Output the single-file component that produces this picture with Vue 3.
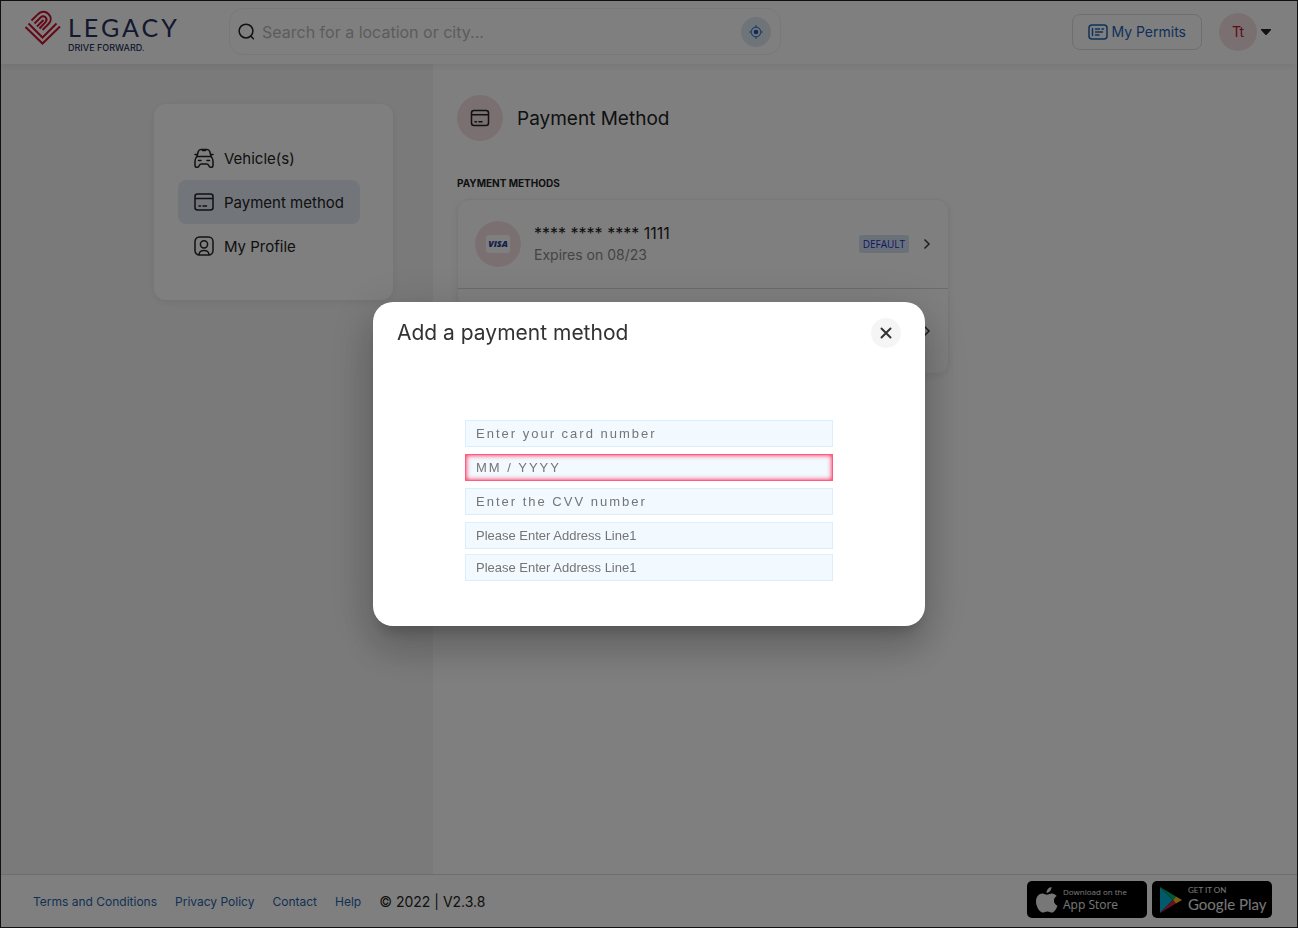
<script setup>
import { ref } from 'vue'

const query = ref('')
const footerLinks = ['Terms and Conditions', 'Privacy Policy', 'Contact', 'Help']
const fields = [
  { id: 'card-number', hint: 'Enter your card number', spaced: true },
  { id: 'card-expiry', hint: 'MM / YYYY', spaced: true, invalid: true },
  { id: 'card-cvv', hint: 'Enter the CVV number', spaced: true },
  { id: 'address-1', hint: 'Please Enter Address Line1' },
  { id: 'address-2', hint: 'Please Enter Address Line1', tight: true },
]
</script>

<template>
  <div class="page">
    <header class="topbar">
      <a class="logo" href="#" aria-label="Legacy Drive Forward">
        <svg width="38" height="36" viewBox="0 0 38 36" fill="none" stroke="#c8102e" stroke-width="2" aria-hidden="true">
          <path d="M1.500 17 18.500 33.500 36 16.500" />
          <path d="M4.500 13.500 18.500 27.500 32.500 13.500" />
          <path d="M7.500 10.500 13.500 4.600C17 1 21.500 1 24.500 4c3 3 3 7 0 10L18.500 20" />
          <path d="M10.500 13.500 16.500 7.500c3.500-3 8 1 5 4.700L15.500 18.500" />
          <path d="M13 16.500 19.500 10" />
        </svg>
        <span class="brand">
          <span class="brand-name">LEGACY</span>
          <span class="brand-tag">DRIVE FORWARD.</span>
        </span>
      </a>

      <form class="search" role="search" @submit.prevent>
        <svg width="17" height="17" viewBox="0 0 18 18" fill="none" stroke="#222" stroke-width="1.600" stroke-linecap="round" aria-hidden="true">
          <circle cx="8.500" cy="8.500" r="7.300" />
          <path d="m14 14.300 2.300 2.300" />
        </svg>
        <input v-model="query" type="text" aria-label="Search" placeholder="Search for a location or city..." />
        <button class="locate" type="button" aria-label="Use my location">
          <svg width="14" height="14" viewBox="0 0 14 14" fill="none" stroke="#4585c4" stroke-width="1.200" aria-hidden="true">
            <circle cx="7" cy="7" r="4.800" />
            <path d="M7 0v3M7 11v3M0 7h3M11 7h3" />
            <circle cx="7" cy="7" r="2.300" fill="#1a50d0" stroke="none" />
          </svg>
        </button>
      </form>

      <div class="account">
        <button class="permits" type="button">
          <svg width="20" height="16" viewBox="0 0 20 16" fill="none" stroke="#1c62b4" stroke-width="1.500" stroke-linecap="round" aria-hidden="true">
            <rect x="1" y="1" width="18" height="14" rx="3" />
            <path d="M4.500 4.500v7M7.500 5h4M14 5h1.500M7.500 8h7M7.500 11h3.500" />
          </svg>
          My Permits
        </button>
        <button class="user" type="button" aria-label="Account menu">
          <span class="avatar">Tt</span>
          <svg width="10" height="6" viewBox="0 0 10 6" aria-hidden="true"><path d="M0 0h10v1L5.500 6h-1L0 1z" fill="#222" /></svg>
        </button>
      </div>
    </header>

    <main class="content">
      <aside class="side">
        <nav class="menu">
          <a href="#">
            <svg width="20" height="20" viewBox="0 0 20 20" fill="none" stroke="#222" stroke-width="1.500" stroke-linecap="round" stroke-linejoin="round" aria-hidden="true">
              <path d="M3 8 4.300 3.500C4.700 2.100 5.500 1.500 7 1.500h6c1.500 0 2.300.6 2.700 2L17 8M1 6.500h1.500M17.500 6.500H19M8.500 2.500h3M3 8.500h14" />
              <path d="M3 8.500C1.500 9.800 1 11 1 13v4.500C1 19 1.500 19.300 2.500 19.300h1c1 0 1.300-.5 1.800-1.800.4-1 .9-1.500 2-1.500h5.400c1.100 0 1.600.5 2 1.500.5 1.300.8 1.800 1.800 1.800h1c1 0 1.500-.3 1.500-1.800V13c0-2-.5-3.200-2-4.500M4.500 12.500h2.500M13 12.500h2.500" />
            </svg>
            Vehicle(s)
          </a>
          <a href="#" class="active" aria-current="page">
            <svg width="20" height="20" viewBox="0 0 20 20" fill="none" stroke="#222" stroke-width="1.500" stroke-linecap="round" aria-hidden="true">
              <rect x="1" y="2" width="18" height="16" rx="2.500" />
              <path d="M1.500 6.500h17M5 14h1.500M9 14h3.500" />
            </svg>
            Payment method
          </a>
          <a href="#">
            <svg width="20" height="20" viewBox="0 0 20 20" fill="none" stroke="#222" stroke-width="1.500" stroke-linecap="round" aria-hidden="true">
              <rect x="1" y="1" width="18" height="18" rx="4.500" />
              <circle cx="10" cy="8.300" r="3.600" />
              <path d="M5 18.500c.3-2.800 2.200-4 5-4s4.700 1.200 5 4" />
            </svg>
            My Profile
          </a>
        </nav>
      </aside>

      <section class="methods">
        <h1>
          <span class="disc">
            <svg width="20" height="20" viewBox="0 0 20 20" fill="none" stroke="#222" stroke-width="1.500" stroke-linecap="round" aria-hidden="true">
              <rect x="1.500" y="2.500" width="17" height="15" rx="2.500" />
              <path d="M2 6.800h16M5 13.800h1.500M9 13.800h3" />
            </svg>
          </span>
          Payment Method
        </h1>
        <h2>PAYMENT METHODS</h2>
        <ul class="cards">
          <li>
            <button type="button">
              <span class="disc"><span class="visa">VISA</span></span>
              <span class="details">
                <span class="number">**** **** **** 1111</span>
                <span class="expiry">Expires on 08/23</span>
              </span>
              <span class="badge">DEFAULT</span>
              <svg class="chevron" width="8" height="12" viewBox="0 0 8 12" fill="none" stroke="#444" stroke-width="1.600" aria-hidden="true"><path d="m1.500 1.500 4.500 4.500-4.500 4.500" /></svg>
            </button>
          </li>
          <li>
            <button type="button" aria-label="Add a payment method">
              <svg class="chevron" width="8" height="12" viewBox="0 0 8 12" fill="none" stroke="#444" stroke-width="1.600" aria-hidden="true"><path d="m1.500 1.500 4.500 4.500-4.500 4.500" /></svg>
            </button>
          </li>
        </ul>
      </section>
    </main>

    <footer class="footer">
      <nav class="links">
        <a v-for="link in footerLinks" :key="link" href="#">{{ link }}</a>
        <span>© 2022 | V2.3.8</span>
      </nav>
      <div class="stores">
        <a href="#" class="store apple">
          <svg width="22" height="26" viewBox="0 0 22 26" fill="#eee" aria-hidden="true">
            <path d="M15.500 0c.2 2.800-2 5.800-4.900 5.900C10.300 3.300 12.700.4 15.500 0zM11 7.800c1 0 2.500-1.300 4.800-1.300 1.800 0 3.700.9 4.900 2.500-4.100 2.500-3.400 8 .8 9.700-.8 2.300-3 6.800-5.600 6.900-1.800 0-2.400-1.100-4.500-1.100s-2.800 1.100-4.500 1.100C3.800 25.700 0 19.500 0 14.500 0 9.500 3 6.600 6.300 6.500c2 0 3.500 1.300 4.700 1.300z" />
          </svg>
          <span><small>Download on the</small><b>App Store</b></span>
        </a>
        <a href="#" class="store google">
          <svg width="24" height="26" viewBox="0 0 24 26" aria-hidden="true">
            <path d="M1 0v26l13-13z" fill="#00b4d8" />
            <path d="M1 0 17 9.500 14 13z" fill="#00b464" />
            <path d="M1 26 17 16.500 14 13z" fill="#d5203f" />
            <path d="m17 9.500 6 3.500-6 3.500-3-3.500z" fill="#f0c020" />
          </svg>
          <span><small>GET IT ON</small><b>Google Play</b></span>
        </a>
      </div>
    </footer>

    <div class="overlay">
      <div class="modal" role="dialog" aria-modal="true" aria-labelledby="modal-title">
        <div class="modal-head">
          <h2 id="modal-title">Add a payment method</h2>
          <button type="button" aria-label="Close">
            <svg width="12" height="12" viewBox="0 0 12 12" fill="none" stroke="#333" stroke-width="2" stroke-linecap="round" aria-hidden="true"><path d="m1.500 1.500 9 9M10.500 1.500l-9 9" /></svg>
          </button>
        </div>
        <form class="card-form" @submit.prevent>
          <input
            v-for="field in fields"
            :id="field.id"
            :key="field.id"
            type="text"
            :aria-label="field.hint"
            :placeholder="field.hint"
            :aria-invalid="field.invalid"
            :class="{ spaced: field.spaced, invalid: field.invalid, tight: field.tight }"
          />
        </form>
      </div>
    </div>
  </div>
</template>

<style>
body {
  margin: 0;
}
</style>

<style scoped>
* {
  box-sizing: border-box;
}
.page {
  display: flex;
  flex-direction: column;
  min-height: 100vh;
  border: 1px solid #222;
  background: #fff;
  color: #222;
  font-family: Inter, "Liberation Sans", sans-serif;
  font-size: 14px;
}
button {
  padding: 0;
  border: 0;
  background: none;
  color: inherit;
  font: inherit;
}
a {
  color: inherit;
  text-decoration: none;
}
svg {
  display: block;
  flex: none;
}
.topbar {
  position: relative;
  display: flex;
  align-items: center;
  height: 63px;
  padding: 0 26px 2px 23px;
  background: #fff;
  box-shadow: 0 2px 8px rgba(0, 0, 0, 0.08);
}
.logo {
  display: flex;
  flex: none;
  gap: 6px;
  width: 205px;
  height: 44px;
  color: #26305e;
}
.brand {
  display: flex;
  flex-direction: column;
  padding-top: 2px;
}
.brand-name {
  font-family: Lato, sans-serif;
  font-size: 25px;
  line-height: 30px;
  letter-spacing: 3px;
}
.brand-tag {
  font-size: 9px;
  line-height: 11px;
  font-weight: 500;
}
.search {
  display: flex;
  align-items: center;
  flex: 0 1 552px;
  height: 47px;
  padding: 0 9px 0 8px;
  border: 1px solid #f0f0f0;
  border-radius: 14px;
}
.search input {
  flex: 1;
  min-width: 0;
  padding: 0 0 0 7px;
  border: 0;
  outline: 0;
  background: none;
  font: 16px Inter, sans-serif;
}
.search input::placeholder {
  color: #b8b8b8;
  opacity: 1;
}
.locate {
  display: grid;
  place-items: center;
  width: 30px;
  height: 30px;
  border-radius: 50%;
  background: #dfe8f3;
}
.account {
  display: flex;
  align-items: center;
  gap: 17px;
  margin-left: auto;
}
.permits {
  display: flex;
  align-items: center;
  gap: 3px;
  height: 36px;
  padding: 0 15px;
  border: 1px solid #ddd;
  border-radius: 8px;
  color: #1c62b4;
}
.user {
  display: flex;
  align-items: center;
  gap: 4px;
}
.avatar {
  display: grid;
  place-items: center;
  width: 38px;
  height: 38px;
  border-radius: 50%;
  background: #f5e0e3;
  color: #b81535;
}
.content {
  display: grid;
  grid-template-columns: 1fr 2fr;
  flex: 1;
}
.side {
  display: flex;
  justify-content: flex-end;
  align-items: flex-start;
  padding: 40px;
  background: #f5f5f5;
}
.menu {
  display: flex;
  flex-direction: column;
  align-items: flex-start;
  width: 239px;
  padding: 32px 24px;
  border-radius: 12px;
  background: #fff;
  box-shadow: 0 2px 8px rgba(0, 0, 0, 0.08);
}
.menu a {
  display: flex;
  align-items: center;
  gap: 10px;
  height: 44px;
  padding: 0 16px;
  border-radius: 8px;
  font-size: 15px;
}
.menu .active {
  background: #e4ebf4;
}
.methods {
  padding: 31px 24px;
}
h1 {
  display: flex;
  align-items: center;
  gap: 14px;
  margin: 0;
  font-size: 19px;
  font-weight: 400;
}
.disc {
  display: grid;
  flex: none;
  place-items: center;
  width: 46px;
  height: 46px;
  border-radius: 50%;
  background: #f5e0e3;
}
.methods h2 {
  margin: 35px 0 8px;
  font-size: 10px;
  line-height: 15px;
  font-weight: 700;
}
.cards {
  max-width: 492px;
  margin: 0;
  padding: 0;
  border: 1px solid #f0f0f0;
  border-radius: 12px;
  list-style: none;
  box-shadow: 0 2px 8px rgba(0, 0, 0, 0.08);
}
.cards li + li {
  border-top: 1px solid #d8d8d8;
}
.cards button {
  display: flex;
  align-items: center;
  width: 100%;
  height: 88px;
  padding: 0 17px;
  text-align: left;
}
.cards li + li button {
  height: 84px;
}
.details {
  display: flex;
  flex-direction: column;
  margin-left: 13px;
}
.number {
  font-size: 16px;
  line-height: 22px;
}
.expiry {
  color: #888;
  line-height: 22px;
}
.visa {
  padding: 3px 2px;
  border-radius: 3px;
  background: #fff;
  color: #1f3f98;
  font: italic 900 9px/12px "Open Sans", sans-serif;
}
.badge {
  margin-left: auto;
  padding: 0 4px;
  border-radius: 3px;
  background: #d7e2f2;
  color: #1a2fd0;
  font: 10px/18px "Open Sans", sans-serif;
}
.chevron {
  margin-left: 14px;
}
li + li .chevron {
  margin-left: auto;
}
.footer {
  display: flex;
  align-items: center;
  justify-content: space-between;
  height: 53px;
  padding: 0 25px 0 32px;
  border-top: 1px solid #ddd;
}
.links {
  display: flex;
  align-items: center;
  gap: 18px;
  font-size: 12px;
}
.links a {
  color: #1f62a8;
}
.links span {
  font-size: 14px;
}
.stores {
  display: flex;
  align-self: flex-start;
  gap: 5px;
  padding-top: 6px;
}
.store {
  display: flex;
  align-items: center;
  gap: 5px;
  width: 120px;
  height: 37px;
  padding: 0 9px;
  border-radius: 5px;
  background: #000;
  color: #eee;
}
.store small,
.store b {
  display: block;
  font-weight: 400;
  white-space: nowrap;
}
.apple {
  font-family: "Open Sans", sans-serif;
}
.apple small {
  font-size: 8px;
  line-height: 11px;
}
.apple b {
  font-size: 12px;
  line-height: 16px;
}
.google {
  padding: 0 7px;
  font-family: Lato, sans-serif;
}
.google small {
  font-size: 8px;
  line-height: 9px;
}
.google b {
  font-size: 15px;
  line-height: 18px;
}
.overlay {
  position: fixed;
  inset: 0;
  display: grid;
  place-items: center;
  background: rgba(0, 0, 0, 0.5);
}
.modal {
  width: 552px;
  max-width: 100%;
  border-radius: 20px;
  background: #fff;
  color: #333;
  box-shadow:
    0 11px 15px -7px rgba(0, 0, 0, 0.2),
    0 24px 38px 3px rgba(0, 0, 0, 0.14),
    0 9px 46px 8px rgba(0, 0, 0, 0.12);
}
.modal-head {
  display: flex;
  align-items: center;
  justify-content: space-between;
  padding: 16px 24px;
}
.modal-head h2 {
  margin: 0;
  font-size: 21px;
  line-height: 30px;
  font-weight: 400;
}
.modal-head button {
  display: grid;
  place-items: center;
  width: 30px;
  height: 30px;
  border-radius: 50%;
  background: #f5f5f5;
}
.card-form {
  display: flex;
  flex-direction: column;
  gap: 7px;
  padding: 56px 92px 45px;
}
.card-form input {
  width: 100%;
  height: 27px;
  padding: 0 10px;
  border: 1px solid #d9eeff;
  border-radius: 0;
  outline: 0;
  background: #f2f9ff;
  font: 13px "Liberation Sans", Arial, sans-serif;
}
.card-form input::placeholder {
  color: #757575;
  opacity: 1;
}
.card-form .spaced {
  letter-spacing: 2px;
}
.card-form .tight {
  margin-top: -2px;
}
.card-form .invalid {
  border-color: #ff5c80;
  box-shadow: inset 0 0 5px #ff1744;
}
</style>
